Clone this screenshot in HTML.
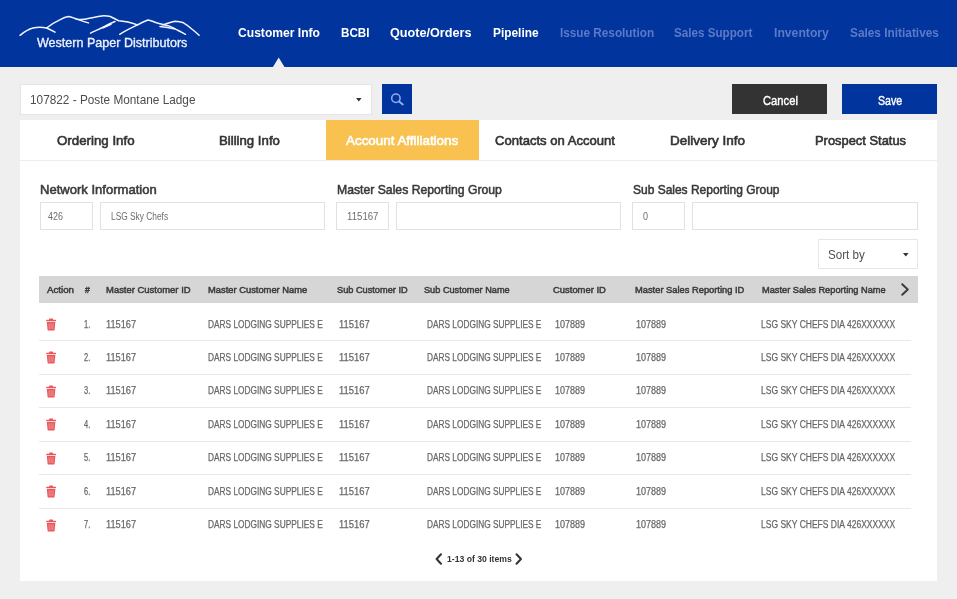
<!DOCTYPE html>
<html lang="en">
<head>
<meta charset="utf-8">
<title>Customer Info - Account Affiliations</title>
<style>
*{box-sizing:border-box;margin:0;padding:0}
html,body{width:957px;height:599px;overflow:hidden}
body{background:#efefef;font-family:"Liberation Sans",sans-serif;position:relative}
.abs{position:absolute}
.t{position:absolute;white-space:pre;transform-origin:0 50%;font-family:"Liberation Sans",sans-serif}
#hdr{left:0;top:0;width:957px;height:67.4px;background:#02349e}
#hdrshadow{display:none}
#tri{left:273px;top:57.2px;width:0;height:0;border-left:6.2px solid transparent;border-right:6.2px solid transparent;border-bottom:9.9px solid #efefef}
#sel{left:20px;top:84px;width:352px;height:30.6px;background:#fff;border:1px solid #e5e5e5}
.caret{width:0;height:0;border-left:2.9px solid transparent;border-right:2.9px solid transparent;border-top:3.9px solid #333}
#search{left:382px;top:84.3px;width:29.6px;height:29.9px;background:#02349e}
#cancel{left:732.3px;top:84.4px;width:95px;height:29.8px;background:#333333}
#save{left:842.2px;top:84.4px;width:95px;height:29.8px;background:#02349e}
#card{left:20px;top:120.4px;width:917px;height:460.6px;background:#fff}
#tabline{left:20px;top:159.5px;width:917px;height:1px;background:#ececec}
#tabact{left:325.7px;top:120px;width:152.9px;height:40px;background:#f8c150}
.inp{position:absolute;top:202px;height:27.5px;background:#fff;border:1px solid #e2e2e2}
#sort{left:818px;top:239.3px;width:100px;height:29.8px;background:#fff;border:1px solid #e6e6e6}
#thead{left:39px;top:276px;width:879px;height:27px;background:#d6d6d6}
.sep{position:absolute;left:39px;width:872px;height:1px;background:#e8e8e8}
svg{position:absolute;overflow:visible}
</style>
</head>
<body>
<div id="hdr" class="abs"></div>
<div id="hdrshadow" class="abs"></div>
<svg style="left:0;top:0" width="957" height="70" viewBox="0 0 957 70"><path d="M272.3 68 L278.7 57.4 L285.1 68 Z" fill="#efefef"/></svg>
<!-- logo mountains -->
<svg style="left:0;top:0" width="220" height="67" viewBox="0 0 220 67" fill="none" stroke="#f2f5fd" stroke-width="1.5" stroke-linecap="round" stroke-linejoin="round">
<path d="M20 35.3 C24 32 29 29 33 28 C38 27 43 27.3 46.6 28 C50 29.5 53 31 55 32.2"/>
<path d="M46.6 28 C51 24.5 56 21.5 60.2 19.6 C63 18 66 16.8 68.5 16.5 C72 17.2 75.5 18.8 79 19.6 C81 19.7 83 19.4 85.2 19.2 C91 18 97 16.6 102 15.9 C105 15.8 108 16 110.3 16.5 C113 17.8 116 19.5 118.7 20.7 C121.5 21.2 124.5 21.4 127 21.7 C131 22.7 134.5 23.8 137.5 24.9"/>
<path d="M74.6 18.4 C79 19.8 84 21.6 88.5 22.9"/>
<path d="M103 27.8 C106 26.2 108.5 25.2 111 24.2"/>
<path d="M160 26.6 C165 27.2 170 28 175 29"/>
<path d="M115 21.5 C111 23 108 24.5 104.5 26.5 C99.5 29 95 31 90.5 33.2"/>
<path d="M119.7 34.3 C125 31 130 28.5 135.4 25.9 C140 23.5 144.5 21.3 148 20 C151 20.6 154 21.8 156.3 22.8 C160.5 23.8 165 24.8 168.8 25.9 C172 27 175 28.5 177.2 30 C180 31.4 183 33 185.5 34.3"/>
<path d="M162.6 24.9 C167 23.5 171 22.2 175.1 21.3 C178 21.5 181 22 183.5 22.8 C186.5 24.6 189.5 26.8 191.8 29 C194.3 31 197 33.3 199.1 35.3"/>
</svg>

<div id="sel" class="abs"></div>
<svg style="left:356.4px;top:97.7px" width="5.6" height="3.6" viewBox="0 0 5.6 3.6"><path d="M0 0 H5.6 L2.8 3.6 Z" fill="#333"/></svg>
<div id="search" class="abs"></div>
<svg style="left:382px;top:84px" width="30" height="30" viewBox="0 0 30 30" fill="none" stroke="#94acee" stroke-width="1.5" stroke-linecap="round"><circle cx="13.9" cy="14.3" r="4.2"/><path d="M17.1 17.4 L20.8 20.5" stroke-width="1.9"/></svg>
<div id="cancel" class="abs"></div>
<div id="save" class="abs"></div>

<div id="card" class="abs"></div>
<div id="tabline" class="abs"></div>
<div id="tabact" class="abs"></div>

<div class="inp" style="left:40px;width:52.5px"></div>
<div class="inp" style="left:100px;width:225px"></div>
<div class="inp" style="left:336px;width:52.5px"></div>
<div class="inp" style="left:396px;width:225px"></div>
<div class="inp" style="left:632px;width:52.5px"></div>
<div class="inp" style="left:692px;width:225.5px"></div>

<div id="sort" class="abs"></div>
<svg style="left:902.6px;top:252.6px" width="5.6" height="3.6" viewBox="0 0 5.6 3.6"><path d="M0 0 H5.6 L2.8 3.6 Z" fill="#333"/></svg>

<div id="thead" class="abs"></div>
<svg style="left:900px;top:282.4px" width="12" height="14" viewBox="0 0 12 14" fill="none" stroke="#3a3a3a" stroke-width="1.9" stroke-linecap="round" stroke-linejoin="round"><path d="M2.2 2.2 L7.8 7.5 L2.2 12.8"/></svg>

<div class="sep" style="top:340.20px"></div>
<div class="sep" style="top:373.67px"></div>
<div class="sep" style="top:407.14px"></div>
<div class="sep" style="top:440.61px"></div>
<div class="sep" style="top:474.08px"></div>
<div class="sep" style="top:507.55px"></div>
<svg style="left:45.9px;top:317.90px" width="10.2" height="13" viewBox="0 0 11 14" fill="#e9575c"><path d="M4 0.6 h3 a0.6 0.6 0 0 1 0.6 0.6 v0.6 h2.6 a0.6 0.6 0 0 1 0.6 0.6 v1.1 h-10.6 v-1.1 a0.6 0.6 0 0 1 0.6 -0.6 h2.6 v-0.6 a0.6 0.6 0 0 1 0.6 -0.6 z"/><path d="M0.9 4.3 h9.2 l-0.8 8.3 a1 1 0 0 1 -1 0.9 h-5.6 a1 1 0 0 1 -1 -0.9 z"/><g stroke="#f6b3b5" stroke-width="0.7" fill="none"><path d="M3.3 5.6 L3.6 12"/><path d="M5.5 5.6 L5.5 12"/><path d="M7.7 5.6 L7.4 12"/></g></svg>
<svg style="left:45.9px;top:351.37px" width="10.2" height="13" viewBox="0 0 11 14" fill="#e9575c"><path d="M4 0.6 h3 a0.6 0.6 0 0 1 0.6 0.6 v0.6 h2.6 a0.6 0.6 0 0 1 0.6 0.6 v1.1 h-10.6 v-1.1 a0.6 0.6 0 0 1 0.6 -0.6 h2.6 v-0.6 a0.6 0.6 0 0 1 0.6 -0.6 z"/><path d="M0.9 4.3 h9.2 l-0.8 8.3 a1 1 0 0 1 -1 0.9 h-5.6 a1 1 0 0 1 -1 -0.9 z"/><g stroke="#f6b3b5" stroke-width="0.7" fill="none"><path d="M3.3 5.6 L3.6 12"/><path d="M5.5 5.6 L5.5 12"/><path d="M7.7 5.6 L7.4 12"/></g></svg>
<svg style="left:45.9px;top:384.84px" width="10.2" height="13" viewBox="0 0 11 14" fill="#e9575c"><path d="M4 0.6 h3 a0.6 0.6 0 0 1 0.6 0.6 v0.6 h2.6 a0.6 0.6 0 0 1 0.6 0.6 v1.1 h-10.6 v-1.1 a0.6 0.6 0 0 1 0.6 -0.6 h2.6 v-0.6 a0.6 0.6 0 0 1 0.6 -0.6 z"/><path d="M0.9 4.3 h9.2 l-0.8 8.3 a1 1 0 0 1 -1 0.9 h-5.6 a1 1 0 0 1 -1 -0.9 z"/><g stroke="#f6b3b5" stroke-width="0.7" fill="none"><path d="M3.3 5.6 L3.6 12"/><path d="M5.5 5.6 L5.5 12"/><path d="M7.7 5.6 L7.4 12"/></g></svg>
<svg style="left:45.9px;top:418.31px" width="10.2" height="13" viewBox="0 0 11 14" fill="#e9575c"><path d="M4 0.6 h3 a0.6 0.6 0 0 1 0.6 0.6 v0.6 h2.6 a0.6 0.6 0 0 1 0.6 0.6 v1.1 h-10.6 v-1.1 a0.6 0.6 0 0 1 0.6 -0.6 h2.6 v-0.6 a0.6 0.6 0 0 1 0.6 -0.6 z"/><path d="M0.9 4.3 h9.2 l-0.8 8.3 a1 1 0 0 1 -1 0.9 h-5.6 a1 1 0 0 1 -1 -0.9 z"/><g stroke="#f6b3b5" stroke-width="0.7" fill="none"><path d="M3.3 5.6 L3.6 12"/><path d="M5.5 5.6 L5.5 12"/><path d="M7.7 5.6 L7.4 12"/></g></svg>
<svg style="left:45.9px;top:451.78px" width="10.2" height="13" viewBox="0 0 11 14" fill="#e9575c"><path d="M4 0.6 h3 a0.6 0.6 0 0 1 0.6 0.6 v0.6 h2.6 a0.6 0.6 0 0 1 0.6 0.6 v1.1 h-10.6 v-1.1 a0.6 0.6 0 0 1 0.6 -0.6 h2.6 v-0.6 a0.6 0.6 0 0 1 0.6 -0.6 z"/><path d="M0.9 4.3 h9.2 l-0.8 8.3 a1 1 0 0 1 -1 0.9 h-5.6 a1 1 0 0 1 -1 -0.9 z"/><g stroke="#f6b3b5" stroke-width="0.7" fill="none"><path d="M3.3 5.6 L3.6 12"/><path d="M5.5 5.6 L5.5 12"/><path d="M7.7 5.6 L7.4 12"/></g></svg>
<svg style="left:45.9px;top:485.25px" width="10.2" height="13" viewBox="0 0 11 14" fill="#e9575c"><path d="M4 0.6 h3 a0.6 0.6 0 0 1 0.6 0.6 v0.6 h2.6 a0.6 0.6 0 0 1 0.6 0.6 v1.1 h-10.6 v-1.1 a0.6 0.6 0 0 1 0.6 -0.6 h2.6 v-0.6 a0.6 0.6 0 0 1 0.6 -0.6 z"/><path d="M0.9 4.3 h9.2 l-0.8 8.3 a1 1 0 0 1 -1 0.9 h-5.6 a1 1 0 0 1 -1 -0.9 z"/><g stroke="#f6b3b5" stroke-width="0.7" fill="none"><path d="M3.3 5.6 L3.6 12"/><path d="M5.5 5.6 L5.5 12"/><path d="M7.7 5.6 L7.4 12"/></g></svg>
<svg style="left:45.9px;top:518.72px" width="10.2" height="13" viewBox="0 0 11 14" fill="#e9575c"><path d="M4 0.6 h3 a0.6 0.6 0 0 1 0.6 0.6 v0.6 h2.6 a0.6 0.6 0 0 1 0.6 0.6 v1.1 h-10.6 v-1.1 a0.6 0.6 0 0 1 0.6 -0.6 h2.6 v-0.6 a0.6 0.6 0 0 1 0.6 -0.6 z"/><path d="M0.9 4.3 h9.2 l-0.8 8.3 a1 1 0 0 1 -1 0.9 h-5.6 a1 1 0 0 1 -1 -0.9 z"/><g stroke="#f6b3b5" stroke-width="0.7" fill="none"><path d="M3.3 5.6 L3.6 12"/><path d="M5.5 5.6 L5.5 12"/><path d="M7.7 5.6 L7.4 12"/></g></svg>
<!-- pagination chevrons -->
<svg style="left:434px;top:552px" width="10" height="14" viewBox="0 0 10 14" fill="none" stroke="#333" stroke-width="2" stroke-linecap="round" stroke-linejoin="round"><path d="M7 2.3 L2.6 7 L7 11.7"/></svg>
<svg style="left:514px;top:552px" width="10" height="14" viewBox="0 0 10 14" fill="none" stroke="#333" stroke-width="2" stroke-linecap="round" stroke-linejoin="round"><path d="M2.5 2.3 L7 7 L2.5 11.7"/></svg>

<div style="position:absolute;left:0;top:0;width:957px;height:599px;will-change:transform">
<span class="t" style="left:238.0px;top:25.41px;font-size:13.2px;line-height:15.84px;font-weight:700;color:#ffffff;transform:scaleX(0.9173)">Customer Info</span>
<span class="t" style="left:340.5px;top:25.41px;font-size:13.2px;line-height:15.84px;font-weight:700;color:#ffffff;transform:scaleX(0.8837)">BCBI</span>
<span class="t" style="left:390.0px;top:25.41px;font-size:13.2px;line-height:15.84px;font-weight:700;color:#ffffff;transform:scaleX(0.9586)">Quote/Orders</span>
<span class="t" style="left:493.0px;top:25.41px;font-size:13.2px;line-height:15.84px;font-weight:700;color:#ffffff;transform:scaleX(0.9016)">Pipeline</span>
<span class="t" style="left:559.6px;top:25.41px;font-size:13.2px;line-height:15.84px;font-weight:700;color:#5b7bc6;transform:scaleX(0.8917)">Issue Resolution</span>
<span class="t" style="left:673.8px;top:25.41px;font-size:13.2px;line-height:15.84px;font-weight:700;color:#5b7bc6;transform:scaleX(0.8842)">Sales Support</span>
<span class="t" style="left:774.0px;top:25.41px;font-size:13.2px;line-height:15.84px;font-weight:700;color:#5b7bc6;transform:scaleX(0.9249)">Inventory</span>
<span class="t" style="left:850.2px;top:25.41px;font-size:13.2px;line-height:15.84px;font-weight:700;color:#5b7bc6;transform:scaleX(0.8983)">Sales Initiatives</span>
<span class="t" style="left:36.8px;top:34.50px;font-size:13.1px;line-height:15.72px;font-weight:400;color:#eef1fb;-webkit-text-stroke:0.35px #eef1fb;transform:scaleX(0.9582)">Western Paper Distributors</span>
<span class="t" style="left:30.0px;top:93.07px;font-size:12.6px;line-height:15.12px;font-weight:400;color:#4d4d4d;transform:scaleX(0.9379)">107822 - Poste Montane Ladge</span>
<span class="t" style="left:762.6px;top:93.76px;font-size:12.4px;line-height:14.88px;font-weight:400;color:#fff;-webkit-text-stroke:0.4px #fff;transform:scaleX(0.9047)">Cancel</span>
<span class="t" style="left:877.8px;top:93.76px;font-size:12.4px;line-height:14.88px;font-weight:400;color:#fff;-webkit-text-stroke:0.4px #fff;transform:scaleX(0.8566)">Save</span>
<span class="t" style="left:56.8px;top:132.92px;font-size:13.4px;line-height:16.08px;font-weight:400;color:#333;-webkit-text-stroke:0.6px #333;transform:scaleX(0.9929)">Ordering Info</span>
<span class="t" style="left:219.0px;top:132.92px;font-size:13.4px;line-height:16.08px;font-weight:400;color:#333;-webkit-text-stroke:0.6px #333;transform:scaleX(0.9855)">Billing Info</span>
<span class="t" style="left:346.0px;top:132.92px;font-size:13.4px;line-height:16.08px;font-weight:400;color:#fff;-webkit-text-stroke:0.6px #fff;transform:scaleX(1.0004)">Account Affiliations</span>
<span class="t" style="left:495.0px;top:132.92px;font-size:13.4px;line-height:16.08px;font-weight:400;color:#333;-webkit-text-stroke:0.6px #333;transform:scaleX(0.9770)">Contacts on Account</span>
<span class="t" style="left:670.0px;top:132.92px;font-size:13.4px;line-height:16.08px;font-weight:400;color:#333;-webkit-text-stroke:0.6px #333;transform:scaleX(1.0078)">Delivery Info</span>
<span class="t" style="left:815.0px;top:132.92px;font-size:13.4px;line-height:16.08px;font-weight:400;color:#333;-webkit-text-stroke:0.6px #333;transform:scaleX(0.9626)">Prospect Status</span>
<span class="t" style="left:40.4px;top:182.18px;font-size:12.8px;line-height:15.36px;font-weight:400;color:#3a3a3a;-webkit-text-stroke:0.55px #3a3a3a;transform:scaleX(1.0191)">Network Information</span>
<span class="t" style="left:336.7px;top:182.18px;font-size:12.8px;line-height:15.36px;font-weight:400;color:#3a3a3a;-webkit-text-stroke:0.55px #3a3a3a;transform:scaleX(0.9540)">Master Sales Reporting Group</span>
<span class="t" style="left:632.5px;top:182.18px;font-size:12.8px;line-height:15.36px;font-weight:400;color:#3a3a3a;-webkit-text-stroke:0.55px #3a3a3a;transform:scaleX(0.9361)">Sub Sales Reporting Group</span>
<span class="t" style="left:48.0px;top:211.03px;font-size:10px;line-height:12.0px;font-weight:400;color:#6e6e6e;transform:scaleX(0.8929)">426</span>
<span class="t" style="left:111.4px;top:211.03px;font-size:10px;line-height:12.0px;font-weight:400;color:#6e6e6e;transform:scaleX(0.8353)">LSG Sky Chefs</span>
<span class="t" style="left:347.4px;top:211.03px;font-size:10px;line-height:12.0px;font-weight:400;color:#6e6e6e;transform:scaleX(0.9651)">115167</span>
<span class="t" style="left:643.0px;top:211.03px;font-size:10px;line-height:12.0px;font-weight:400;color:#6e6e6e;transform:scaleX(0.8989)">0</span>
<span class="t" style="left:828.0px;top:247.66px;font-size:12.4px;line-height:14.88px;font-weight:400;color:#505050;transform:scaleX(0.9372)">Sort by</span>
<span class="t" style="left:46.8px;top:284.70px;font-size:9.3px;line-height:11.16px;font-weight:400;color:#3c3c3c;-webkit-text-stroke:0.5px #3c3c3c;transform:scaleX(1.0447)">Action</span>
<span class="t" style="left:84.6px;top:284.70px;font-size:9.3px;line-height:11.16px;font-weight:400;color:#3c3c3c;-webkit-text-stroke:0.5px #3c3c3c;transform:scaleX(0.9281)">#</span>
<span class="t" style="left:106.3px;top:284.70px;font-size:9.3px;line-height:11.16px;font-weight:400;color:#3c3c3c;-webkit-text-stroke:0.5px #3c3c3c;transform:scaleX(1.0170)">Master Customer ID</span>
<span class="t" style="left:208.3px;top:284.70px;font-size:9.3px;line-height:11.16px;font-weight:400;color:#3c3c3c;-webkit-text-stroke:0.5px #3c3c3c;transform:scaleX(1.0062)">Master Customer Name</span>
<span class="t" style="left:337.4px;top:284.70px;font-size:9.3px;line-height:11.16px;font-weight:400;color:#3c3c3c;-webkit-text-stroke:0.5px #3c3c3c;transform:scaleX(0.9900)">Sub Customer ID</span>
<span class="t" style="left:424.3px;top:284.70px;font-size:9.3px;line-height:11.16px;font-weight:400;color:#3c3c3c;-webkit-text-stroke:0.5px #3c3c3c;transform:scaleX(0.9872)">Sub Customer Name</span>
<span class="t" style="left:553.1px;top:284.70px;font-size:9.3px;line-height:11.16px;font-weight:400;color:#3c3c3c;-webkit-text-stroke:0.5px #3c3c3c;transform:scaleX(1.0137)">Customer ID</span>
<span class="t" style="left:634.7px;top:284.70px;font-size:9.3px;line-height:11.16px;font-weight:400;color:#3c3c3c;-webkit-text-stroke:0.5px #3c3c3c;transform:scaleX(1.0025)">Master Sales Reporting ID</span>
<span class="t" style="left:761.5px;top:284.70px;font-size:9.3px;line-height:11.16px;font-weight:400;color:#3c3c3c;-webkit-text-stroke:0.5px #3c3c3c;transform:scaleX(0.9933)">Master Sales Reporting Name</span>
<span class="t" style="left:83.7px;top:318.54px;font-size:10px;line-height:12.0px;font-weight:400;color:#686868;-webkit-text-stroke:0.25px #686868;transform:scaleX(0.7431)">1.</span>
<span class="t" style="left:106.3px;top:318.54px;font-size:10px;line-height:12.0px;font-weight:400;color:#686868;-webkit-text-stroke:0.25px #686868;transform:scaleX(0.9222)">115167</span>
<span class="t" style="left:208.0px;top:318.54px;font-size:10px;line-height:12.0px;font-weight:400;color:#686868;-webkit-text-stroke:0.25px #686868;transform:scaleX(0.8322)">DARS LODGING SUPPLIES E</span>
<span class="t" style="left:339.4px;top:318.54px;font-size:10px;line-height:12.0px;font-weight:400;color:#686868;-webkit-text-stroke:0.25px #686868;transform:scaleX(0.9436)">115167</span>
<span class="t" style="left:427.0px;top:318.54px;font-size:10px;line-height:12.0px;font-weight:400;color:#686868;-webkit-text-stroke:0.25px #686868;transform:scaleX(0.8300)">DARS LODGING SUPPLIES E</span>
<span class="t" style="left:555.1px;top:318.54px;font-size:10px;line-height:12.0px;font-weight:400;color:#686868;-webkit-text-stroke:0.25px #686868;transform:scaleX(0.9019)">107889</span>
<span class="t" style="left:635.7px;top:318.54px;font-size:10px;line-height:12.0px;font-weight:400;color:#686868;-webkit-text-stroke:0.25px #686868;transform:scaleX(0.9019)">107889</span>
<span class="t" style="left:760.8px;top:318.54px;font-size:10px;line-height:12.0px;font-weight:400;color:#686868;-webkit-text-stroke:0.25px #686868;transform:scaleX(0.8511)">LSG SKY CHEFS DIA 426XXXXXX</span>
<span class="t" style="left:83.7px;top:352.01px;font-size:10px;line-height:12.0px;font-weight:400;color:#686868;-webkit-text-stroke:0.25px #686868;transform:scaleX(0.7431)">2.</span>
<span class="t" style="left:106.3px;top:352.01px;font-size:10px;line-height:12.0px;font-weight:400;color:#686868;-webkit-text-stroke:0.25px #686868;transform:scaleX(0.9222)">115167</span>
<span class="t" style="left:208.0px;top:352.01px;font-size:10px;line-height:12.0px;font-weight:400;color:#686868;-webkit-text-stroke:0.25px #686868;transform:scaleX(0.8322)">DARS LODGING SUPPLIES E</span>
<span class="t" style="left:339.4px;top:352.01px;font-size:10px;line-height:12.0px;font-weight:400;color:#686868;-webkit-text-stroke:0.25px #686868;transform:scaleX(0.9436)">115167</span>
<span class="t" style="left:427.0px;top:352.01px;font-size:10px;line-height:12.0px;font-weight:400;color:#686868;-webkit-text-stroke:0.25px #686868;transform:scaleX(0.8300)">DARS LODGING SUPPLIES E</span>
<span class="t" style="left:555.1px;top:352.01px;font-size:10px;line-height:12.0px;font-weight:400;color:#686868;-webkit-text-stroke:0.25px #686868;transform:scaleX(0.9019)">107889</span>
<span class="t" style="left:635.7px;top:352.01px;font-size:10px;line-height:12.0px;font-weight:400;color:#686868;-webkit-text-stroke:0.25px #686868;transform:scaleX(0.9019)">107889</span>
<span class="t" style="left:760.8px;top:352.01px;font-size:10px;line-height:12.0px;font-weight:400;color:#686868;-webkit-text-stroke:0.25px #686868;transform:scaleX(0.8511)">LSG SKY CHEFS DIA 426XXXXXX</span>
<span class="t" style="left:83.7px;top:385.48px;font-size:10px;line-height:12.0px;font-weight:400;color:#686868;-webkit-text-stroke:0.25px #686868;transform:scaleX(0.7431)">3.</span>
<span class="t" style="left:106.3px;top:385.48px;font-size:10px;line-height:12.0px;font-weight:400;color:#686868;-webkit-text-stroke:0.25px #686868;transform:scaleX(0.9222)">115167</span>
<span class="t" style="left:208.0px;top:385.48px;font-size:10px;line-height:12.0px;font-weight:400;color:#686868;-webkit-text-stroke:0.25px #686868;transform:scaleX(0.8322)">DARS LODGING SUPPLIES E</span>
<span class="t" style="left:339.4px;top:385.48px;font-size:10px;line-height:12.0px;font-weight:400;color:#686868;-webkit-text-stroke:0.25px #686868;transform:scaleX(0.9436)">115167</span>
<span class="t" style="left:427.0px;top:385.48px;font-size:10px;line-height:12.0px;font-weight:400;color:#686868;-webkit-text-stroke:0.25px #686868;transform:scaleX(0.8300)">DARS LODGING SUPPLIES E</span>
<span class="t" style="left:555.1px;top:385.48px;font-size:10px;line-height:12.0px;font-weight:400;color:#686868;-webkit-text-stroke:0.25px #686868;transform:scaleX(0.9019)">107889</span>
<span class="t" style="left:635.7px;top:385.48px;font-size:10px;line-height:12.0px;font-weight:400;color:#686868;-webkit-text-stroke:0.25px #686868;transform:scaleX(0.9019)">107889</span>
<span class="t" style="left:760.8px;top:385.48px;font-size:10px;line-height:12.0px;font-weight:400;color:#686868;-webkit-text-stroke:0.25px #686868;transform:scaleX(0.8511)">LSG SKY CHEFS DIA 426XXXXXX</span>
<span class="t" style="left:83.7px;top:418.94px;font-size:10px;line-height:12.0px;font-weight:400;color:#686868;-webkit-text-stroke:0.25px #686868;transform:scaleX(0.7431)">4.</span>
<span class="t" style="left:106.3px;top:418.94px;font-size:10px;line-height:12.0px;font-weight:400;color:#686868;-webkit-text-stroke:0.25px #686868;transform:scaleX(0.9222)">115167</span>
<span class="t" style="left:208.0px;top:418.94px;font-size:10px;line-height:12.0px;font-weight:400;color:#686868;-webkit-text-stroke:0.25px #686868;transform:scaleX(0.8322)">DARS LODGING SUPPLIES E</span>
<span class="t" style="left:339.4px;top:418.94px;font-size:10px;line-height:12.0px;font-weight:400;color:#686868;-webkit-text-stroke:0.25px #686868;transform:scaleX(0.9436)">115167</span>
<span class="t" style="left:427.0px;top:418.94px;font-size:10px;line-height:12.0px;font-weight:400;color:#686868;-webkit-text-stroke:0.25px #686868;transform:scaleX(0.8300)">DARS LODGING SUPPLIES E</span>
<span class="t" style="left:555.1px;top:418.94px;font-size:10px;line-height:12.0px;font-weight:400;color:#686868;-webkit-text-stroke:0.25px #686868;transform:scaleX(0.9019)">107889</span>
<span class="t" style="left:635.7px;top:418.94px;font-size:10px;line-height:12.0px;font-weight:400;color:#686868;-webkit-text-stroke:0.25px #686868;transform:scaleX(0.9019)">107889</span>
<span class="t" style="left:760.8px;top:418.94px;font-size:10px;line-height:12.0px;font-weight:400;color:#686868;-webkit-text-stroke:0.25px #686868;transform:scaleX(0.8511)">LSG SKY CHEFS DIA 426XXXXXX</span>
<span class="t" style="left:83.7px;top:452.42px;font-size:10px;line-height:12.0px;font-weight:400;color:#686868;-webkit-text-stroke:0.25px #686868;transform:scaleX(0.7431)">5.</span>
<span class="t" style="left:106.3px;top:452.42px;font-size:10px;line-height:12.0px;font-weight:400;color:#686868;-webkit-text-stroke:0.25px #686868;transform:scaleX(0.9222)">115167</span>
<span class="t" style="left:208.0px;top:452.42px;font-size:10px;line-height:12.0px;font-weight:400;color:#686868;-webkit-text-stroke:0.25px #686868;transform:scaleX(0.8322)">DARS LODGING SUPPLIES E</span>
<span class="t" style="left:339.4px;top:452.42px;font-size:10px;line-height:12.0px;font-weight:400;color:#686868;-webkit-text-stroke:0.25px #686868;transform:scaleX(0.9436)">115167</span>
<span class="t" style="left:427.0px;top:452.42px;font-size:10px;line-height:12.0px;font-weight:400;color:#686868;-webkit-text-stroke:0.25px #686868;transform:scaleX(0.8300)">DARS LODGING SUPPLIES E</span>
<span class="t" style="left:555.1px;top:452.42px;font-size:10px;line-height:12.0px;font-weight:400;color:#686868;-webkit-text-stroke:0.25px #686868;transform:scaleX(0.9019)">107889</span>
<span class="t" style="left:635.7px;top:452.42px;font-size:10px;line-height:12.0px;font-weight:400;color:#686868;-webkit-text-stroke:0.25px #686868;transform:scaleX(0.9019)">107889</span>
<span class="t" style="left:760.8px;top:452.42px;font-size:10px;line-height:12.0px;font-weight:400;color:#686868;-webkit-text-stroke:0.25px #686868;transform:scaleX(0.8511)">LSG SKY CHEFS DIA 426XXXXXX</span>
<span class="t" style="left:83.7px;top:485.89px;font-size:10px;line-height:12.0px;font-weight:400;color:#686868;-webkit-text-stroke:0.25px #686868;transform:scaleX(0.7431)">6.</span>
<span class="t" style="left:106.3px;top:485.89px;font-size:10px;line-height:12.0px;font-weight:400;color:#686868;-webkit-text-stroke:0.25px #686868;transform:scaleX(0.9222)">115167</span>
<span class="t" style="left:208.0px;top:485.89px;font-size:10px;line-height:12.0px;font-weight:400;color:#686868;-webkit-text-stroke:0.25px #686868;transform:scaleX(0.8322)">DARS LODGING SUPPLIES E</span>
<span class="t" style="left:339.4px;top:485.89px;font-size:10px;line-height:12.0px;font-weight:400;color:#686868;-webkit-text-stroke:0.25px #686868;transform:scaleX(0.9436)">115167</span>
<span class="t" style="left:427.0px;top:485.89px;font-size:10px;line-height:12.0px;font-weight:400;color:#686868;-webkit-text-stroke:0.25px #686868;transform:scaleX(0.8300)">DARS LODGING SUPPLIES E</span>
<span class="t" style="left:555.1px;top:485.89px;font-size:10px;line-height:12.0px;font-weight:400;color:#686868;-webkit-text-stroke:0.25px #686868;transform:scaleX(0.9019)">107889</span>
<span class="t" style="left:635.7px;top:485.89px;font-size:10px;line-height:12.0px;font-weight:400;color:#686868;-webkit-text-stroke:0.25px #686868;transform:scaleX(0.9019)">107889</span>
<span class="t" style="left:760.8px;top:485.89px;font-size:10px;line-height:12.0px;font-weight:400;color:#686868;-webkit-text-stroke:0.25px #686868;transform:scaleX(0.8511)">LSG SKY CHEFS DIA 426XXXXXX</span>
<span class="t" style="left:83.7px;top:519.35px;font-size:10px;line-height:12.0px;font-weight:400;color:#686868;-webkit-text-stroke:0.25px #686868;transform:scaleX(0.7431)">7.</span>
<span class="t" style="left:106.3px;top:519.35px;font-size:10px;line-height:12.0px;font-weight:400;color:#686868;-webkit-text-stroke:0.25px #686868;transform:scaleX(0.9222)">115167</span>
<span class="t" style="left:208.0px;top:519.35px;font-size:10px;line-height:12.0px;font-weight:400;color:#686868;-webkit-text-stroke:0.25px #686868;transform:scaleX(0.8322)">DARS LODGING SUPPLIES E</span>
<span class="t" style="left:339.4px;top:519.35px;font-size:10px;line-height:12.0px;font-weight:400;color:#686868;-webkit-text-stroke:0.25px #686868;transform:scaleX(0.9436)">115167</span>
<span class="t" style="left:427.0px;top:519.35px;font-size:10px;line-height:12.0px;font-weight:400;color:#686868;-webkit-text-stroke:0.25px #686868;transform:scaleX(0.8300)">DARS LODGING SUPPLIES E</span>
<span class="t" style="left:555.1px;top:519.35px;font-size:10px;line-height:12.0px;font-weight:400;color:#686868;-webkit-text-stroke:0.25px #686868;transform:scaleX(0.9019)">107889</span>
<span class="t" style="left:635.7px;top:519.35px;font-size:10px;line-height:12.0px;font-weight:400;color:#686868;-webkit-text-stroke:0.25px #686868;transform:scaleX(0.9019)">107889</span>
<span class="t" style="left:760.8px;top:519.35px;font-size:10px;line-height:12.0px;font-weight:400;color:#686868;-webkit-text-stroke:0.25px #686868;transform:scaleX(0.8511)">LSG SKY CHEFS DIA 426XXXXXX</span>
<span class="t" style="left:446.5px;top:554.40px;font-size:9.3px;line-height:11.16px;font-weight:700;color:#333;transform:scaleX(0.9274)">1-13 of 30 items</span>
</div>
</body>
</html>
